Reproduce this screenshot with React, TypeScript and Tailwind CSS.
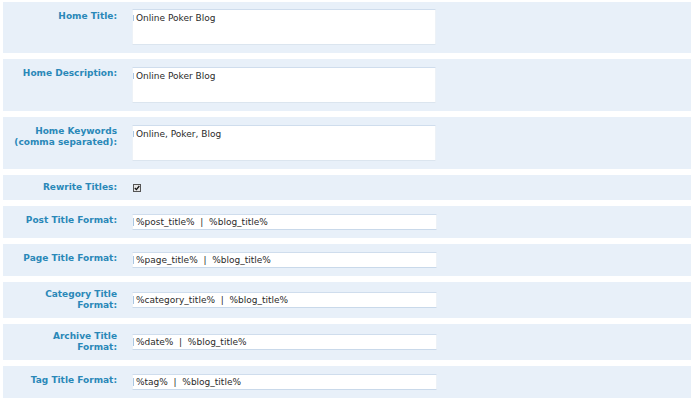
import React from "react";

const font = { fontFamily: '"DejaVu Sans", Verdana, sans-serif' };

function Label({ lines }: { lines: string[] }) {
  return (
    <div className="w-[114px] shrink-0 text-right font-bold text-[9px] leading-[11px] text-[#2a88b8]">
      {lines.map((l, i) => (
        <div key={i}>{l}</div>
      ))}
    </div>
  );
}

function TextArea({ value }: { value: string }) {
  return (
    <div className="relative ml-[15px] h-[36px] w-[304px] border border-[#edf2f7] border-t-[#cfdded] border-b-[#dbe5ef] bg-white pl-[3px] pt-[3px] text-[9px] leading-[11px] text-[#2a2a2a]">
      <span className="absolute left-0 top-[5px] h-[6px] w-px bg-[#a9c6e2]" />
      {value}
    </div>
  );
}

function Input({ value }: { value: string }) {
  return (
    <div className="relative ml-[15px] h-[16px] w-[305px] border border-[#edf2f7] border-t-[#cfdded] border-b-[#c9d9ea] bg-white pl-[3px] pt-[2px] text-[9px] leading-[11px] text-[#2a2a2a] whitespace-pre">
      <span className="absolute left-0 top-[3px] h-[8px] w-px bg-[#a9c6e2]" />
      {value}
    </div>
  );
}

export default function App() {
  return (
    <div style={font} className="w-[694px] h-[403px] bg-white pt-[2px] px-[3px] flex flex-col gap-[6px]">
      <div className="flex items-start h-[51px] bg-[#e8f0f9] pt-[7px]">
        <div className="pt-[2px]"><Label lines={["Home Title:"]} /></div>
        <TextArea value="Online Poker Blog" />
      </div>
      <div className="flex items-start h-[52px] bg-[#e8f0f9] pt-[8px]">
        <div className="pt-[1px]"><Label lines={["Home Description:"]} /></div>
        <TextArea value="Online Poker Blog" />
      </div>
      <div className="flex items-start h-[52px] bg-[#e8f0f9] pt-[8px]">
        <div className="pt-[1px]"><Label lines={["Home Keywords", "(comma separated):"]} /></div>
        <TextArea value="Online, Poker, Blog" />
      </div>
      <div className="flex items-center h-[25px] bg-[#e8f0f9]">
        <Label lines={["Rewrite Titles:"]} />
        <div className="ml-[16px] flex h-[8px] w-[8px] items-center justify-center border border-[#555] bg-[#e6e6e6]">
          <svg width="6" height="6" viewBox="0 0 6 6">
            <path d="M0.8 3 L2.4 4.6 L5.3 1" stroke="#111" strokeWidth="1.3" fill="none" />
          </svg>
        </div>
      </div>
      <div className="flex items-start h-[32px] bg-[#e8f0f9] pt-[8px]">
        <div className="pt-[1px]"><Label lines={["Post Title Format:"]} /></div>
        <Input value="%post_title%  |  %blog_title%" />
      </div>
      <div className="flex items-start h-[32px] bg-[#e8f0f9] pt-[8px]">
        <div className="pt-[1px]"><Label lines={["Page Title Format:"]} /></div>
        <Input value="%page_title%  |  %blog_title%" />
      </div>
      <div className="flex items-center h-[36px] bg-[#e8f0f9]">
        <Label lines={["Category Title", "Format:"]} />
        <Input value="%category_title%  |  %blog_title%" />
      </div>
      <div className="flex items-center h-[36px] bg-[#e8f0f9]">
        <Label lines={["Archive Title", "Format:"]} />
        <Input value="%date%  |  %blog_title%" />
      </div>
      <div className="flex items-start h-[32px] bg-[#e8f0f9] pt-[8px]">
        <div className="pt-[1px]"><Label lines={["Tag Title Format:"]} /></div>
        <Input value="%tag%  |  %blog_title%" />
      </div>
    </div>
  );
}
